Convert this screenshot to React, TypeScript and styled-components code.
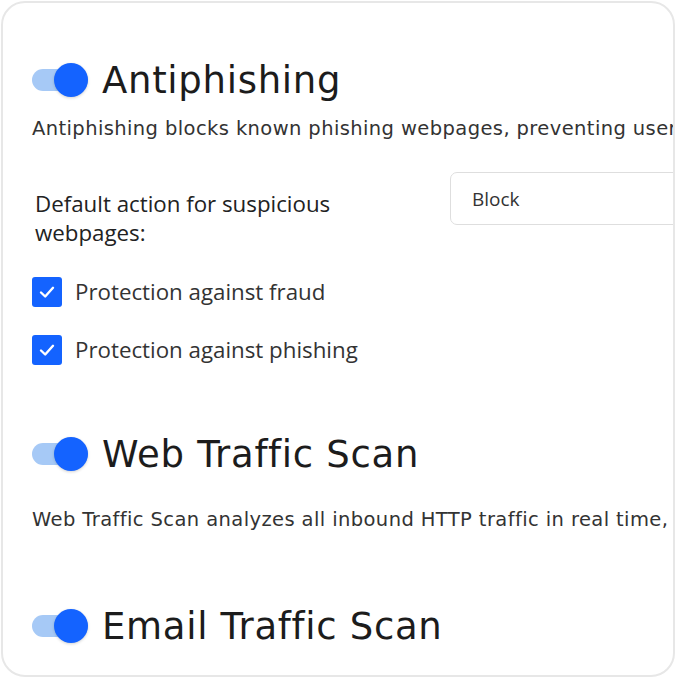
import styled, { createGlobalStyle } from 'styled-components';

const GlobalStyle = createGlobalStyle`
    html, body {
        margin: 0;
        padding: 0;
        background: #ffffff;
    }
    body {
        font-family: 'Open Sans', 'Noto Sans', sans-serif;
        color: #222;
    }
`;

const Card = styled.div`
    box-sizing: border-box;
    margin: 1px;
    width: 674px;
    height: 676px;
    border: 2px solid #e7e7e7;
    border-radius: 24px;
    overflow: hidden;
    padding: 43px 0 0 29px;
`;

const Section = styled.section<{ $gap?: number }>`
    margin-bottom: ${({ $gap }) => $gap ?? 0}px;
`;

const Header = styled.div`
    display: flex;
    align-items: center;
    gap: 14px;
    height: 68px;
`;

const Toggle = styled.span`
    position: relative;
    display: inline-block;
    width: 56px;
    height: 22px;
    border-radius: 11px;
    background: #a6c9f6;
    flex: none;
    &::after {
        content: '';
        position: absolute;
        right: 0;
        top: 50%;
        width: 34px;
        height: 34px;
        margin-top: -17px;
        border-radius: 50%;
        background: #1463ff;
        box-shadow: 0 1px 3px rgba(0, 0, 0, 0.18);
    }
`;

const Title = styled.h2`
    margin: 0;
    font-family: 'DejaVu Sans', 'Noto Sans', sans-serif;
    font-weight: 400;
    font-size: 37px;
    letter-spacing: 0.7px;
    color: #1c1c1c;
    white-space: nowrap;
`;

const Description = styled.p<{ $top: number }>`
    margin: ${({ $top }) => $top}px 0 0 0;
    font-family: 'DejaVu Sans', 'Noto Sans', sans-serif;
    font-size: 19.5px;
    letter-spacing: 0.4px;
    line-height: 24px;
    color: #333;
    white-space: nowrap;
`;

const ActionRow = styled.div`
    display: flex;
    align-items: flex-start;
    margin-top: 31px;
`;

const ActionLabel = styled.div`
    flex: none;
    width: 418px;
    padding: 17px 0 0 3px;
    box-sizing: border-box;
    font-size: 22.3px;
    line-height: 29px;
    color: #222;
`;

const Select = styled.div`
    box-sizing: border-box;
    flex: none;
    width: 300px;
    height: 53px;
    border: 1.5px solid #dedede;
    border-radius: 7px;
    display: flex;
    align-items: center;
    padding-left: 21px;
    font-size: 19px;
    color: #333;
`;

const Options = styled.div`
    display: flex;
    flex-direction: column;
    gap: 28px;
    margin-top: 30px;
`;

const Option = styled.label`
    display: flex;
    align-items: center;
    gap: 13px;
    font-size: 22.3px;
    line-height: 30px;
    color: #333;
    white-space: nowrap;
`;

const Box = styled.span`
    width: 30px;
    height: 30px;
    border-radius: 3px;
    background: #1463ff;
    display: flex;
    align-items: center;
    justify-content: center;
    flex: none;
`;

function Check() {
    return (
        <Box>
            <svg width="18" height="18" viewBox="0 0 18 18" fill="none">
                <path d="M3 9.5 L7.2 13.5 L15 4.8" stroke="#fff" strokeWidth="2.4" strokeLinecap="round" strokeLinejoin="round" />
            </svg>
        </Box>
    );
}

function SectionHeader({ title }: { title: string }) {
    return (
        <Header>
            <Toggle />
            <Title>{title}</Title>
        </Header>
    );
}

export default function App() {
    return (
        <>
            <GlobalStyle />
            <Card>
                <Section $gap={55}>
                    <SectionHeader title="Antiphishing" />
                    <Description $top={3}>
                        Antiphishing blocks known phishing webpages, preventing users from accessing them.
                    </Description>
                    <ActionRow>
                        <ActionLabel>
                            Default action for suspicious
                            <br />
                            webpages:
                        </ActionLabel>
                        <Select>Block</Select>
                    </ActionRow>
                    <Options>
                        <Option>
                            <Check />
                            Protection against fraud
                        </Option>
                        <Option>
                            <Check />
                            Protection against phishing
                        </Option>
                    </Options>
                </Section>
                <Section $gap={60}>
                    <SectionHeader title="Web Traffic Scan" />
                    <Description $top={20}>
                        Web Traffic Scan analyzes all inbound HTTP traffic in real time, protecting users.
                    </Description>
                </Section>
                <Section>
                    <SectionHeader title="Email Traffic Scan" />
                </Section>
            </Card>
        </>
    );
}
